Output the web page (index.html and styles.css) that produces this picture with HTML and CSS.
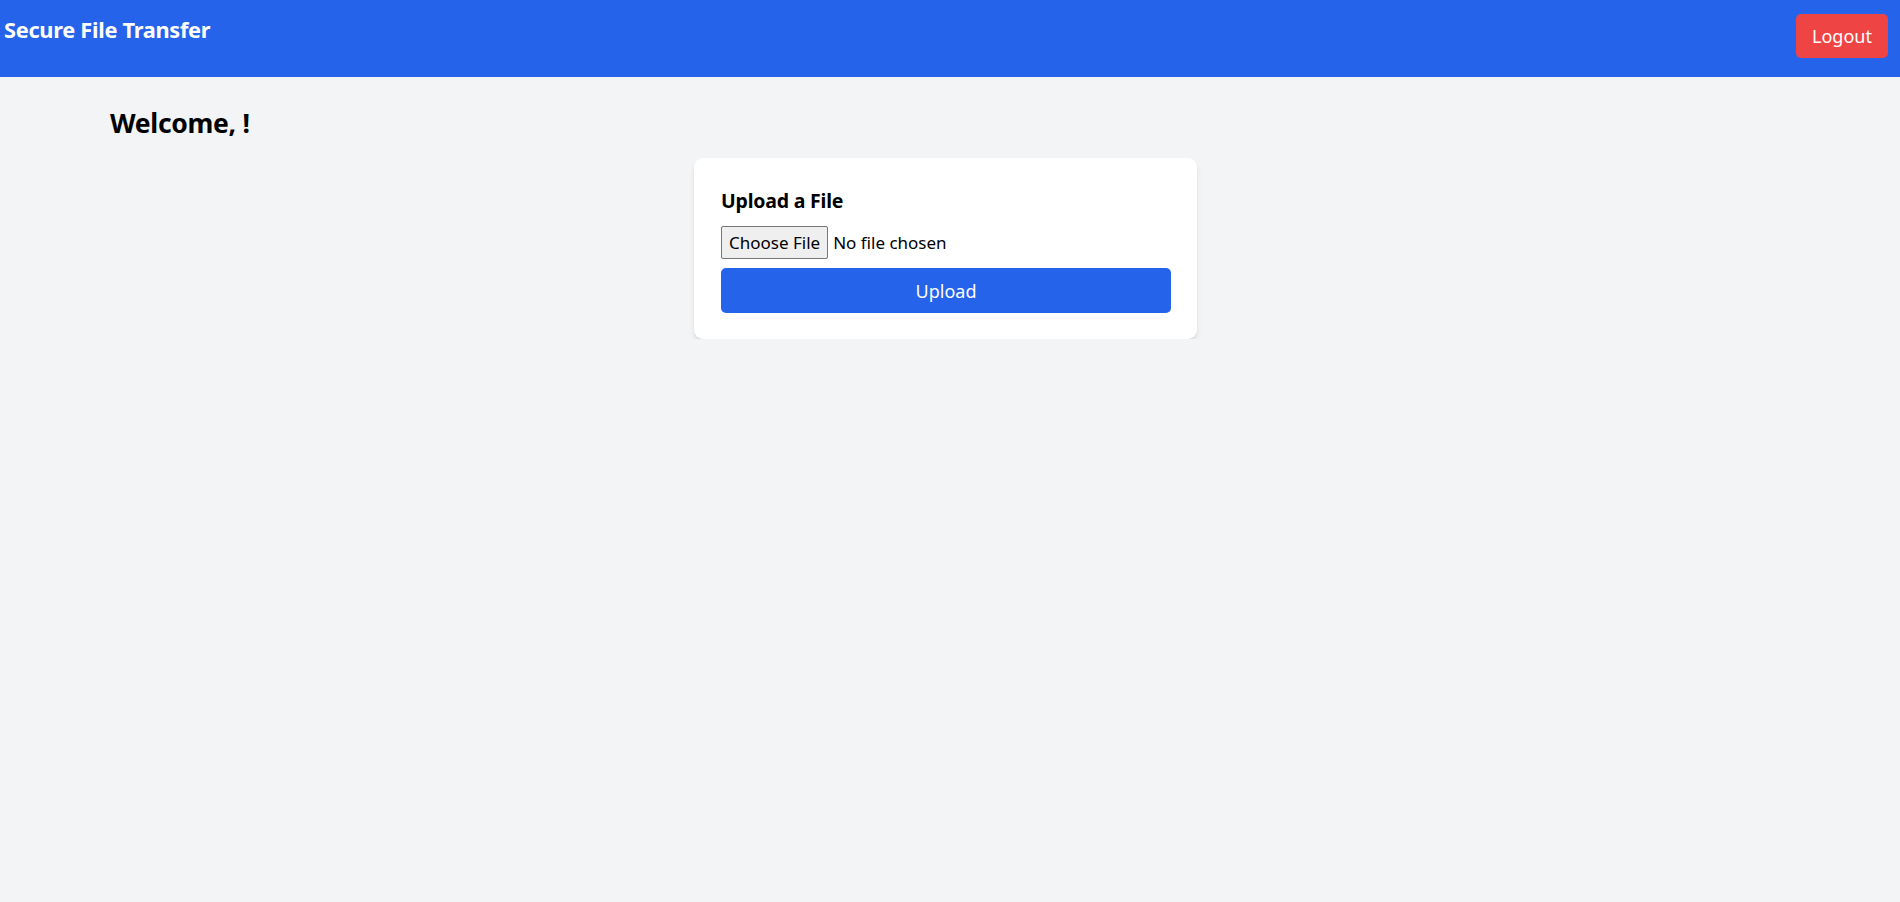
FILE: index.html
```html
<!DOCTYPE html>
<html lang="en">
<head>
<meta charset="utf-8">
<title>Secure File Transfer</title>
<link rel="stylesheet" href="styles.css">
</head>
<body>
<header class="topbar">
  <h1 class="brand">Secure File Transfer</h1>
  <button class="logout" type="button">Logout</button>
</header>
<main class="content">
  <h2 class="welcome">Welcome, !</h2>
  <section class="card">
    <h3 class="card-title">Upload a File</h3>
    <input class="file" type="file">
    <button class="upload" type="button">Upload</button>
  </section>
</main>
</body>
</html>
```

FILE: styles.css
```css
* { box-sizing: border-box; }
html, body {
  margin: 0;
  padding: 0;
  background: #f3f4f6;
  font-family: "Noto Sans", "Open Sans", sans-serif;
  color: #000;
}
.topbar {
  background: #2563eb;
  height: 77px;
  display: flex;
  justify-content: space-between;
  align-items: flex-start;
  padding: 14px 12px 0 4px;
}
.brand {
  margin: 2px 0 0;
  color: #fff;
  font-size: 21.8px;
  font-weight: 700;
  line-height: 28px;
  letter-spacing: -0.3px;
}
.logout {
  background: #ef4444;
  color: #fff;
  border: none;
  border-radius: 5px;
  width: 92px;
  height: 44px;
  font-family: inherit;
  font-size: 18px;
  padding: 0;
}
.content {
  padding: 28px 119px 0 110px;
}
.welcome {
  margin: 0 0 17px;
  font-size: 26.5px;
  font-weight: 700;
  line-height: 36px;
  letter-spacing: -0.3px;
}
.card {
  width: 503px;
  margin: 0 auto;
  background: #fff;
  border-radius: 9px;
  box-shadow: 0 4px 6px -1px rgba(0,0,0,0.1), 0 2px 4px -2px rgba(0,0,0,0.1);
  padding: 29px 26px 26px 27px;
  display: flex;
  flex-direction: column;
}
.card-title {
  margin: 0 0 11px;
  font-size: 19.5px;
  font-weight: 700;
  line-height: 28px;
  letter-spacing: -0.2px;
}
.file {
  font-family: inherit;
  font-size: 17px;
  height: 33px;
  margin-bottom: 9px;
  color: #000;
}
.file::file-selector-button {
  font-family: "Noto Sans", "Open Sans", sans-serif;
  font-size: 17px;
  height: 33px;
  padding: 0 7px;
  margin-right: 5px;
  background: #efefef;
  border: 1px solid #767676;
  border-radius: 2px;
  color: #000;
}
.upload {
  background: #2563eb;
  color: #fff;
  border: none;
  border-radius: 5px;
  height: 45px;
  font-family: inherit;
  font-size: 18px;
}
```
